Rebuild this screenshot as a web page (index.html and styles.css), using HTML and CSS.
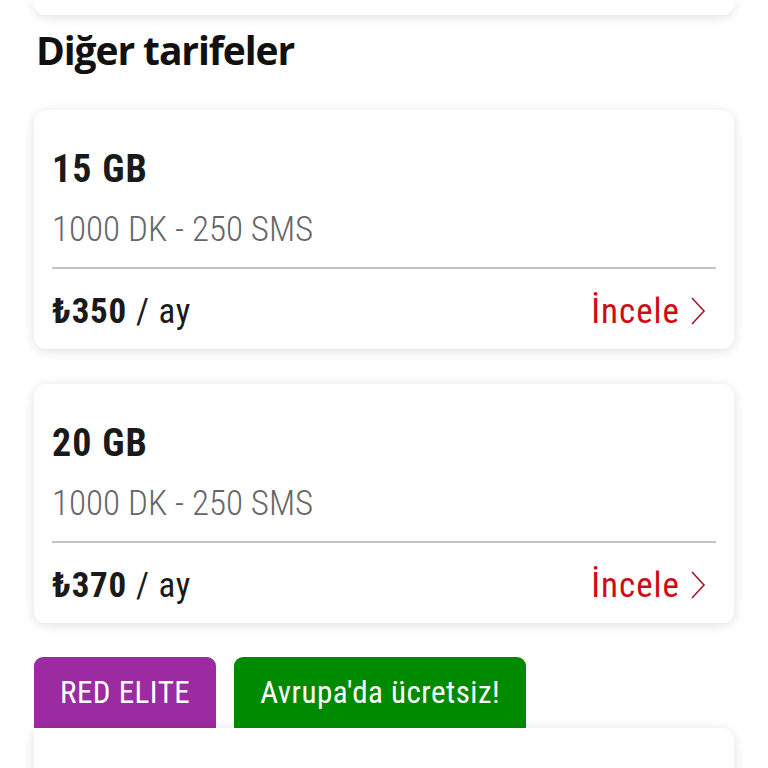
FILE: index.html
```html
<html>

<head>
  <meta charset="UTF-8">
  <meta name="viewport" content="width=device-width, initial-scale=1">
  <title>Diğer tarifeler</title>
  <link rel="stylesheet" href="styles.css">
</head>

<body>
  <div class="page">
    <div class="card prev"></div>

    <h1 class="title">Diğer tarifeler</h1>

    <div class="card plan">
      <div class="gb">15 GB</div>
      <div class="desc">1000 DK - 250 SMS</div>
      <div class="foot">
        <div class="price"><b>₺350</b> / ay</div>
        <a class="more" href="#">İncele
          <svg width="16" height="28" viewBox="0 0 16 28"><path d="M2 1 L14 14 L2 27" fill="none" stroke="#a3162e" stroke-width="1.6" /></svg>
        </a>
      </div>
    </div>

    <div class="card plan">
      <div class="gb">20 GB</div>
      <div class="desc">1000 DK - 250 SMS</div>
      <div class="foot">
        <div class="price"><b>₺370</b> / ay</div>
        <a class="more" href="#">İncele
          <svg width="16" height="28" viewBox="0 0 16 28"><path d="M2 1 L14 14 L2 27" fill="none" stroke="#a3162e" stroke-width="1.6" /></svg>
        </a>
      </div>
    </div>

    <div class="tabs">
      <span class="tag purple">RED ELITE</span>
      <span class="tag green">Avrupa'da ücretsiz!</span>
    </div>
    <div class="card next"></div>
  </div>
</body>

</html>
```

FILE: styles.css
```css
body {
  margin: 0;
  padding: 0;
  background: #ffffff;
  font-family: "Roboto Condensed", "Open Sans", sans-serif;
  color: #1a1a1a;
}

.page {
  display: flex;
  flex-direction: column;
  padding: 0 34px;
  height: 768px;
  overflow: hidden;
}

.page>* {
  flex-shrink: 0;
}

.card {
  background: #ffffff;
  border-radius: 12px;
  box-shadow: 0 2px 12px rgba(0, 0, 0, 0.13);
}

.prev {
  height: 15px;
  border-radius: 0 0 12px 12px;
}

.title {
  font-family: "Open Sans", sans-serif;
  font-size: 39px;
  font-weight: 700;
  letter-spacing: -1.1px;
  margin: 13px 0 0 2px;
  height: 82px;
  line-height: 44px;
  color: #111111;
}

.plan {
  display: flex;
  flex-direction: column;
  height: 239px;
  box-sizing: border-box;
  padding: 39px 18px 0 18px;
  margin-bottom: 35px;
}

.gb {
  font-size: 38px;
  font-weight: 700;
  letter-spacing: 1px;
  line-height: 40px;
  color: #1a1a1a;
}

.desc {
  font-size: 35px;
  font-weight: 300;
  color: #666666;
  line-height: 40px;
  margin-top: 21px;
  padding-bottom: 17px;
  border-bottom: 2px solid #c4c4c4;
}

.foot {
  display: flex;
  justify-content: space-between;
  align-items: center;
  flex: 1;
  padding-top: 4px;
}

.price {
  font-size: 35px;
  font-weight: 400;
  letter-spacing: 0.8px;
  color: #1a1a1a;
}

.price b {
  font-weight: 700;
}

.more {
  display: flex;
  align-items: center;
  gap: 10px;
  font-size: 35px;
  letter-spacing: 1px;
  color: #d00a14;
  text-decoration: none;
  padding-right: 10px;
}

.tabs {
  display: flex;
  gap: 18px;
  margin-top: -1px;
}

.tag {
  display: flex;
  align-items: center;
  height: 71px;
  padding: 0 26px;
  border-radius: 9px 9px 0 0;
  color: #ffffff;
  font-size: 31px;
  letter-spacing: 0.5px;
}

.purple {
  background: #9c2aa0;
}

.green {
  background: #008a00;
}

.next {
  height: 60px;
  border-radius: 0 12px 0 0;
}
```
